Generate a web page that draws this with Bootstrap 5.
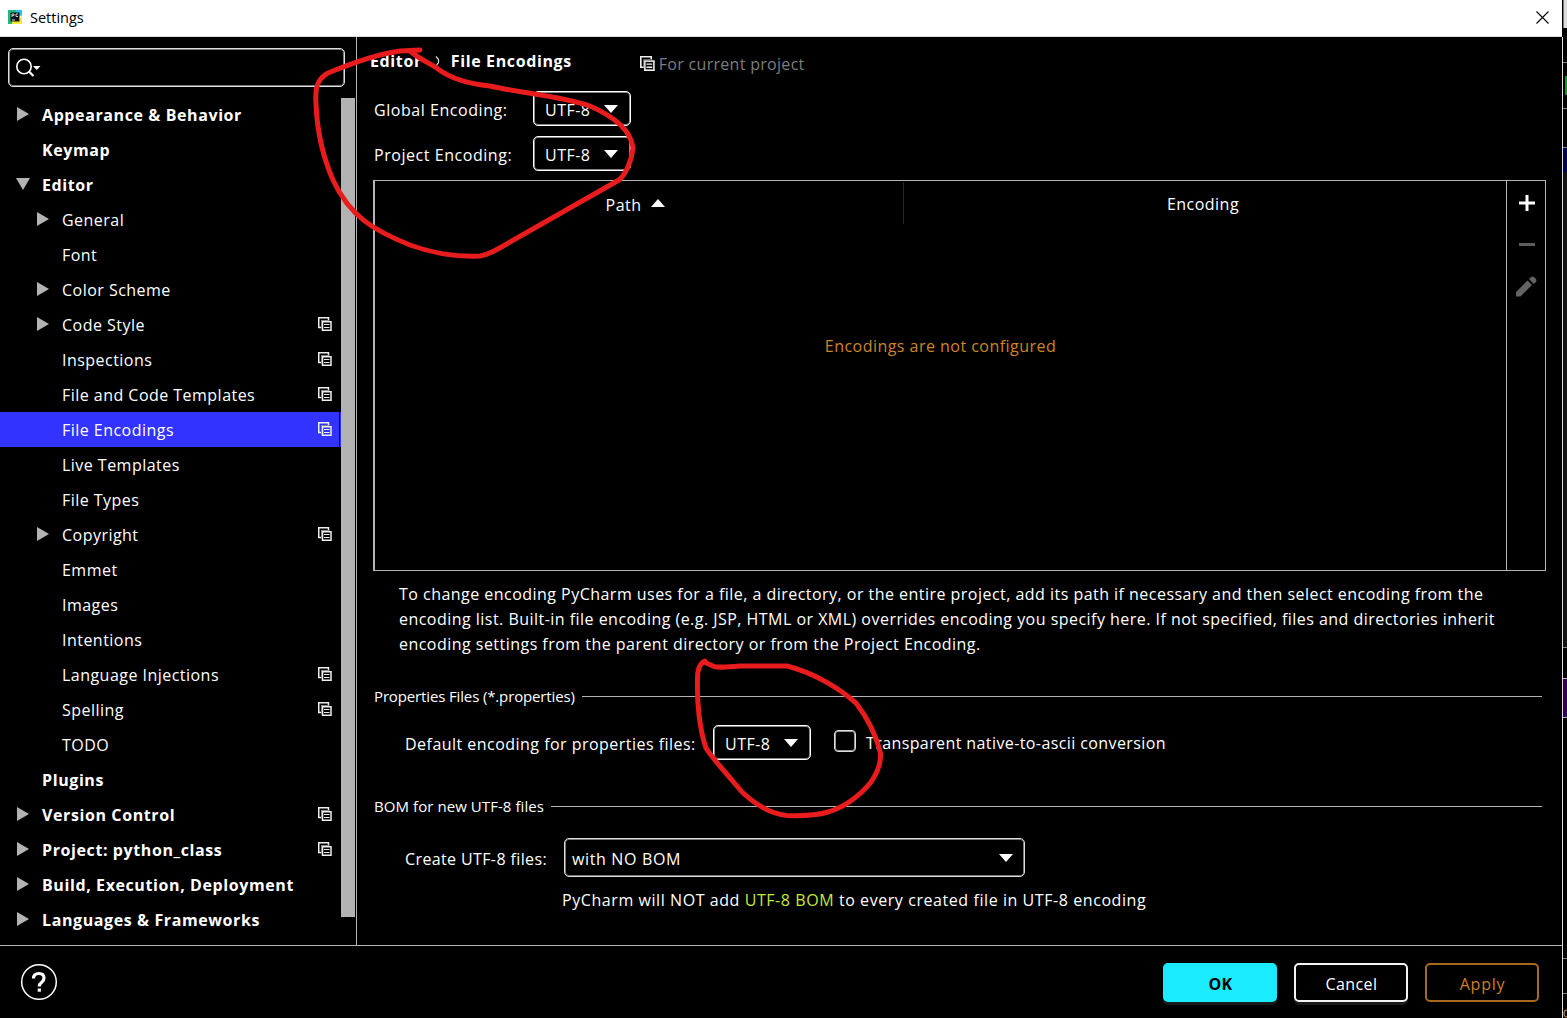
<!DOCTYPE html>
<html lang="en" data-bs-theme="dark">
<head>
<meta charset="utf-8">
<title>Settings</title>
<link href="https://cdn.jsdelivr.net/npm/bootstrap@5.3.0/dist/css/bootstrap.min.css" rel="stylesheet">
<style>
  body { background:#000; color:#fff; font:400 16px/25px "Open Sans","Noto Sans",sans-serif; letter-spacing:.47px; width:1567px; height:1018px; }
  svg { display:block; flex:none; }
  .titlebar { height:37px; background:#fff; color:#000; font-size:14.5px; letter-spacing:0; border-bottom:1px solid #dcdcdc; padding:0 13px 2px 8px; }
  .win { width:1562px; }
  .win-edge { width:1px; margin-top:37px; background:#e0e0e0; }
  .content-area { height:908px; }
  .sidebar { width:357px; border-right:1px solid #b4b4b4; padding-top:11px; }
  .searchbox { width:337px; height:39px; margin-left:8px; border:1px solid #dedede; box-shadow:inset 0 0 0 1px #777; border-radius:5px; padding-left:7px; }
  .tree { width:341px; padding-top:3px; margin-top:-1px; }
  .tree-row { height:35px; padding:1px 9px 0 16px; }
  .tree-row .arrow { width:26px; }
  .tree-row .arrow svg, .tree-row > svg { margin-bottom:2px; }
  .tree-row.sub { padding-left:36px; }
  .tree-row.top { font-weight:700; letter-spacing:.6px; }
  .tree-row.active { background:linear-gradient(90deg,#3333ff 339px,#000 339px 340px,#3333ff 340px); }
  .thumb { width:14px; height:819px; margin-top:3px; background:#b3b3b3; }
  .main { padding:0 16px 0 16px; }
  .crumbs { height:49px; font-weight:700; letter-spacing:.62px; padding-top:12px; }
  .crumbs .trail { margin-left:-3px; }
  .crumbs .scope { font-weight:400; color:#7d7d7d; letter-spacing:.3px; margin-left:68px; padding-top:3px; }
  .crumbs .chev { margin:7px 11px 0 13px; }
  .enc-row { height:45px; padding-left:1px; }
  .enc-row .lbl { width:159px; padding-top:3px; letter-spacing:.55px; }
  .combo { height:35px; width:98px; border:1px solid #fff; box-shadow:inset 0 0 0 1px #888; border-radius:5px; padding:3px 12px 0 11px; }
  .combo svg { margin-bottom:3px; }
  .combo.wide { width:461px; height:39px; padding:3px 11px 0 7px; border-color:#dedede; box-shadow:inset 0 0 0 1px #777; }
  .enc-table { height:391px; width:1173px; margin-top:4px; border:1px solid #b4b4b4; border-left-width:2px; }
  .th-row { height:43px; padding-top:1px; }
  .th-path { width:529px; border-right:1px solid #262626; padding:4px 7px 0 0; }
  .th-path svg { margin:0 0 5px 10px; }
  .th-enc { padding:10px 4px 0 0; }
  .none-set { color:#cf8427; margin-top:110px; }
  .tools { width:39px; border-left:1px solid #b4b4b4; padding:14px 0 0 1px; }
  .info { margin:11px 0 0 26px; height:75px; white-space:nowrap; }
  .sect { font-size:15px; letter-spacing:-.14px; height:29px; padding-left:1px; margin:25px 4px 0 0; }
  .sect.bom { margin-top:32px; letter-spacing:.07px; }
  .sect span { padding-bottom:1px; }
  .sect hr { flex:1; margin:0 0 0 7px; border:0; height:1px; background:#b4b4b4; opacity:1; }
  .props-row { height:35px; margin-top:14px; padding-left:32px; }
  .bom-row { height:39px; margin-top:17px; padding-left:32px; }
  .cbx { width:22px; height:22px; border:1px solid #dedede; box-shadow:inset 0 0 0 1px #999; border-radius:4px; margin:-3px 10px 0 23px; }
  .hint { margin:11px 0 0 189px; letter-spacing:.57px; }
  .lime { color:#c3ea3c; }
  .footbar { border-top:1px solid #b4b4b4; height:73px; padding:0 23px 0 20px; }
  .dlg-btn { width:114px; height:39px; border:2px solid #f4f4f4; border-radius:5px; color:#fff; background:#000; font-size:16px; letter-spacing:.4px; line-height:25px; padding:5px 0 0 1px; box-shadow:0 3px 0 #1a1c1c; font-family:inherit; }
  .dlg-btn.ok { background:#1aebff; border-color:#1aebff; color:#000; font-weight:700; }
  .dlg-btn.apply { border-color:#a9691b; color:#cf7f22; box-shadow:none; letter-spacing:.8px; }
  .ink { left:0; top:0; pointer-events:none; }
</style>
<script src="https://cdn.jsdelivr.net/npm/bootstrap@5.3.0/dist/js/bootstrap.bundle.min.js"></script>
</head>
<body class="overflow-hidden d-flex position-relative">
<svg width="0" height="0" class="position-absolute">
  <symbol id="copy" viewBox="0 0 14 14"><path d="M4 10.500H.750V.750H10.500V3" fill="none" stroke="#eee" stroke-width="1.500"/><rect x="4.500" y="4.750" width="8.500" height="8.500" fill="none" stroke="#eee" stroke-width="1.500"/><path d="M6 7.500h5.500M6 10.500h5.500" stroke="#eee" stroke-width="1.200"/><path d="M3 3.500h8.500M3.500 3v8" stroke="#888" stroke-width="1"/></symbol>
  <symbol id="right" viewBox="0 0 13 14"><path d="M1 0L13 7L1 14Z" fill="#b3b3b3"/></symbol>
  <symbol id="down" viewBox="0 0 14 12"><path d="M0 0H14L7 12Z" fill="#b3b3b3"/></symbol>
  <symbol id="caret" viewBox="0 0 14 8"><path d="M0 0H14L7 8Z" fill="#fff"/></symbol>
</svg>

<div class="win d-flex flex-column">
  <header class="titlebar d-flex align-items-center">
    <svg width="14" height="14" viewBox="0 0 14 14"><path d="M0 0H9L7 14H0Z" fill="#21b97c"/><path d="M8 0H14V6L9 5Z" fill="#20c5ee"/><path d="M14 5V14H4V11L11 10Z" fill="#f5ea3a"/><rect x="2.500" y="2.500" width="9" height="9" fill="#111"/><path d="M4 7V4h2v1.600H4M10 4H8v2.500h2" fill="none" stroke="#ddd" stroke-width=".9"/><path d="M4 10h3" stroke="#ddd"/></svg>
    <span class="ms-2 flex-grow-1">Settings</span>
    <svg width="13" height="13" viewBox="0 0 13 13"><path d="M.5 .5L12.500 12.500M12.500 .5L.5 12.500" stroke="#000" stroke-width="1.100"/></svg>
  </header>

  <div class="content-area d-flex">
    <aside class="sidebar">
      <div class="searchbox d-flex align-items-center">
        <svg width="26" height="20" viewBox="0 0 26 20"><circle cx="8" cy="8.500" r="7.200" fill="none" stroke="#fff" stroke-width="1.600"/><path d="M13 13.500L17.500 18" stroke="#fff" stroke-width="2.200"/><path d="M17 8H24.500L20.750 12Z" fill="#fff"/></svg>
      </div>
      <div class="d-flex pt-2">
        <nav class="tree" id="tree"></nav>
        <div class="thumb"></div>
      </div>
    </aside>

    <main class="main flex-grow-1">
      <div class="crumbs d-flex"><span class="trail">Editor</span><svg class="chev" width="5" height="11" viewBox="0 0 5 11"><path d="M1 .5L3.500 3.500V6.500L1 10" fill="none" stroke="#ddd" stroke-width="1.200"/></svg><span>File Encodings</span>
        <div class="scope d-flex"><svg class="me-1 mt-1" width="15" height="15"><use href="#copy"/></svg>For current project</div>
      </div>
      <div class="enc-row d-flex align-items-center"><span class="lbl">Global Encoding:</span><div class="combo d-flex align-items-center justify-content-between">UTF-8<svg width="14" height="8"><use href="#caret"/></svg></div></div>
      <div class="enc-row d-flex align-items-center"><span class="lbl">Project Encoding:</span><div class="combo d-flex align-items-center justify-content-between">UTF-8<svg width="14" height="8"><use href="#caret"/></svg></div></div>

      <div class="enc-table d-flex">
        <div class="flex-grow-1">
          <div class="th-row d-flex text-center">
            <div class="th-path d-flex justify-content-center align-items-center"><span>Path</span><svg width="14" height="8" viewBox="0 0 14 8"><path d="M0 8L7 0L14 8Z" fill="#fff"/></svg></div>
            <div class="th-enc flex-grow-1">Encoding</div>
          </div>
          <div class="none-set text-center">Encodings are not configured</div>
        </div>
        <div class="tools d-flex flex-column align-items-center">
          <svg width="16" height="16" viewBox="0 0 16 16"><path d="M0 8H16M8 0V16" stroke="#fff" stroke-width="3"/></svg>
          <svg width="16" height="3" style="margin-top:32px"><rect width="16" height="3" fill="#5e5e5e"/></svg>
          <svg width="21" height="21" viewBox="0 0 21 21" style="margin-top:30px"><path d="M0 16L11.500 4.500L16 9L4.500 20.500H0Z" fill="#636363"/><path d="M13 3L15 1Q16.500 0 18 1L20 3Q21 4.500 20 6L17.500 8Z" fill="#636363"/></svg>
        </div>
      </div>

      <div class="info">To change encoding PyCharm uses for a file, a directory, or the entire project, add its path if necessary and then select encoding from the<br>encoding list. Built-in file encoding (e.g. JSP, HTML or XML) overrides encoding you specify here. If not specified, files and directories inherit<br>encoding settings from the parent directory or from the Project Encoding.</div>

      <div class="sect d-flex align-items-center"><span>Properties Files (*.properties)</span><hr></div>
      <div class="props-row d-flex align-items-center"><span class="pt-1" style="width:308px">Default encoding for properties files:</span><div class="combo d-flex align-items-center justify-content-between">UTF-8<svg width="14" height="8"><use href="#caret"/></svg></div><div class="cbx"></div><span class="pt-1" style="letter-spacing:.4px;margin-top:-2px">Transparent native-to-ascii conversion</span></div>

      <div class="sect bom d-flex align-items-center"><span>BOM for new UTF-8 files</span><hr></div>
      <div class="bom-row d-flex align-items-center"><span class="pt-1" style="width:159px;letter-spacing:.38px">Create UTF-8 files:</span><div class="combo wide d-flex align-items-center justify-content-between"><span style="letter-spacing:.65px">with NO BOM</span><svg width="14" height="8"><use href="#caret"/></svg></div></div>
      <div class="hint">PyCharm will NOT add <span class="lime">UTF-8 BOM</span> to every created file in UTF-8 encoding</div>
    </main>
  </div>

  <footer class="footbar d-flex align-items-center">
    <svg class="me-auto" width="38" height="38" viewBox="0 0 38 38"><circle cx="19" cy="19" r="17.300" fill="none" stroke="#fff" stroke-width="1.500"/><path d="M13.500 15.500Q13.500 10.500 19 10.500Q24 10.500 24 15Q24 17.500 21.500 19.500Q19.300 21 19.300 23.500" fill="none" stroke="#fff" stroke-width="3.200"/><rect x="17.700" y="25.500" width="3.200" height="3.200" fill="#fff"/></svg>
    <button class="dlg-btn ok">OK</button>
    <button class="dlg-btn" style="margin:0 17px">Cancel</button>
    <button class="dlg-btn apply">Apply</button>
  </footer>
</div>
<div class="win-edge"></div>
<svg width="4" height="1018" viewBox="0 0 4 1018"><rect width="4" height="28" fill="#dcdcdc"/><rect width="1" height="28" fill="#777"/><rect y="28" width="4" height="990" fill="#000"/><rect y="172" width="4" height="475" fill="#111"/><path d="M0 62.500H4M0 108.500H4M0 147.500H4M0 647.500H4M0 958.500H4M0 993.500H4" stroke="#888"/><rect x="2" y="76" width="2" height="19" fill="#0a9a20"/><rect y="148" width="4" height="24" fill="#00004d"/><rect y="678" width="4" height="40" fill="#330059"/><path d="M0 678.500H4M0 717.500H4" stroke="#bbb"/><path d="M4 1010Q1 1010 1 1013.500Q1 1017 4 1017" fill="none" stroke="#c98a4a" stroke-width="1.200"/></svg>

<svg class="ink position-absolute" width="1567" height="1018" viewBox="0 0 1567 1018" fill="none" stroke="#e81c1c" stroke-width="5" stroke-linecap="round" stroke-linejoin="round">
  <path d="M420 50L400 51C378 54 345 66 328 73C317 79 315 88 316 104C317 128 322 155 333 180C350 217 375 231 410 245C435 254 455 257 480 256C487 255 490 253 496 250L619 180C626 174 632 160 633 148C631 130 615 117 590 106C560 96 520 93 490 86C470 84 450 78 438 69C430 63 422 61 410 51"/>
  <path d="M705 661C700 663 697 670 697.500 682C697 700 699 728 706 748C712 758 727 774 742 792C757 806 773 814 787 815.500C802 816 815 816 828 812C843 808 860 796 871 782C878 772 881 762 880.500 753C876 735 866 716 856 703C840 689 815 673 787 666H740C725 667 716 668 713 666L704 662"/>
</svg>

<script>
  // kind, label, arrow, project-level mark
  const rows = [
    ["top","Appearance &amp; Behavior","right",0],["top","Keymap","",0],["top","Editor","down",0],
    ["sub","General","right",0],["sub","Font","",0],["sub","Color Scheme","right",0],["sub","Code Style","right",1],
    ["sub","Inspections","",1],["sub","File and Code Templates","",1],["sub active","File Encodings","",1],
    ["sub","Live Templates","",0],["sub","File Types","",0],["sub","Copyright","right",1],["sub","Emmet","",0],
    ["sub","Images","",0],["sub","Intentions","",0],["sub","Language Injections","",1],["sub","Spelling","",1],
    ["sub","TODO","",0],["top","Plugins","",0],["top","Version Control","right",1],["top","Project: python_class","right",1],
    ["top","Build, Execution, Deployment","right",0],["top","Languages &amp; Frameworks","right",0]];
  document.getElementById("tree").innerHTML = rows.map(([k,t,a,c]) =>
    `<div class="tree-row ${k} d-flex align-items-center"><span class="arrow">${a ? `<svg width="${a=="down"?14:13}" height="${a=="down"?12:14}"><use href="#${a}"/></svg>` : ""}</span><span class="flex-grow-1">${t}</span>${c ? `<svg width="14" height="14"><use href="#copy"/></svg>` : ""}</div>`).join("");
</script>
</body>
</html>
